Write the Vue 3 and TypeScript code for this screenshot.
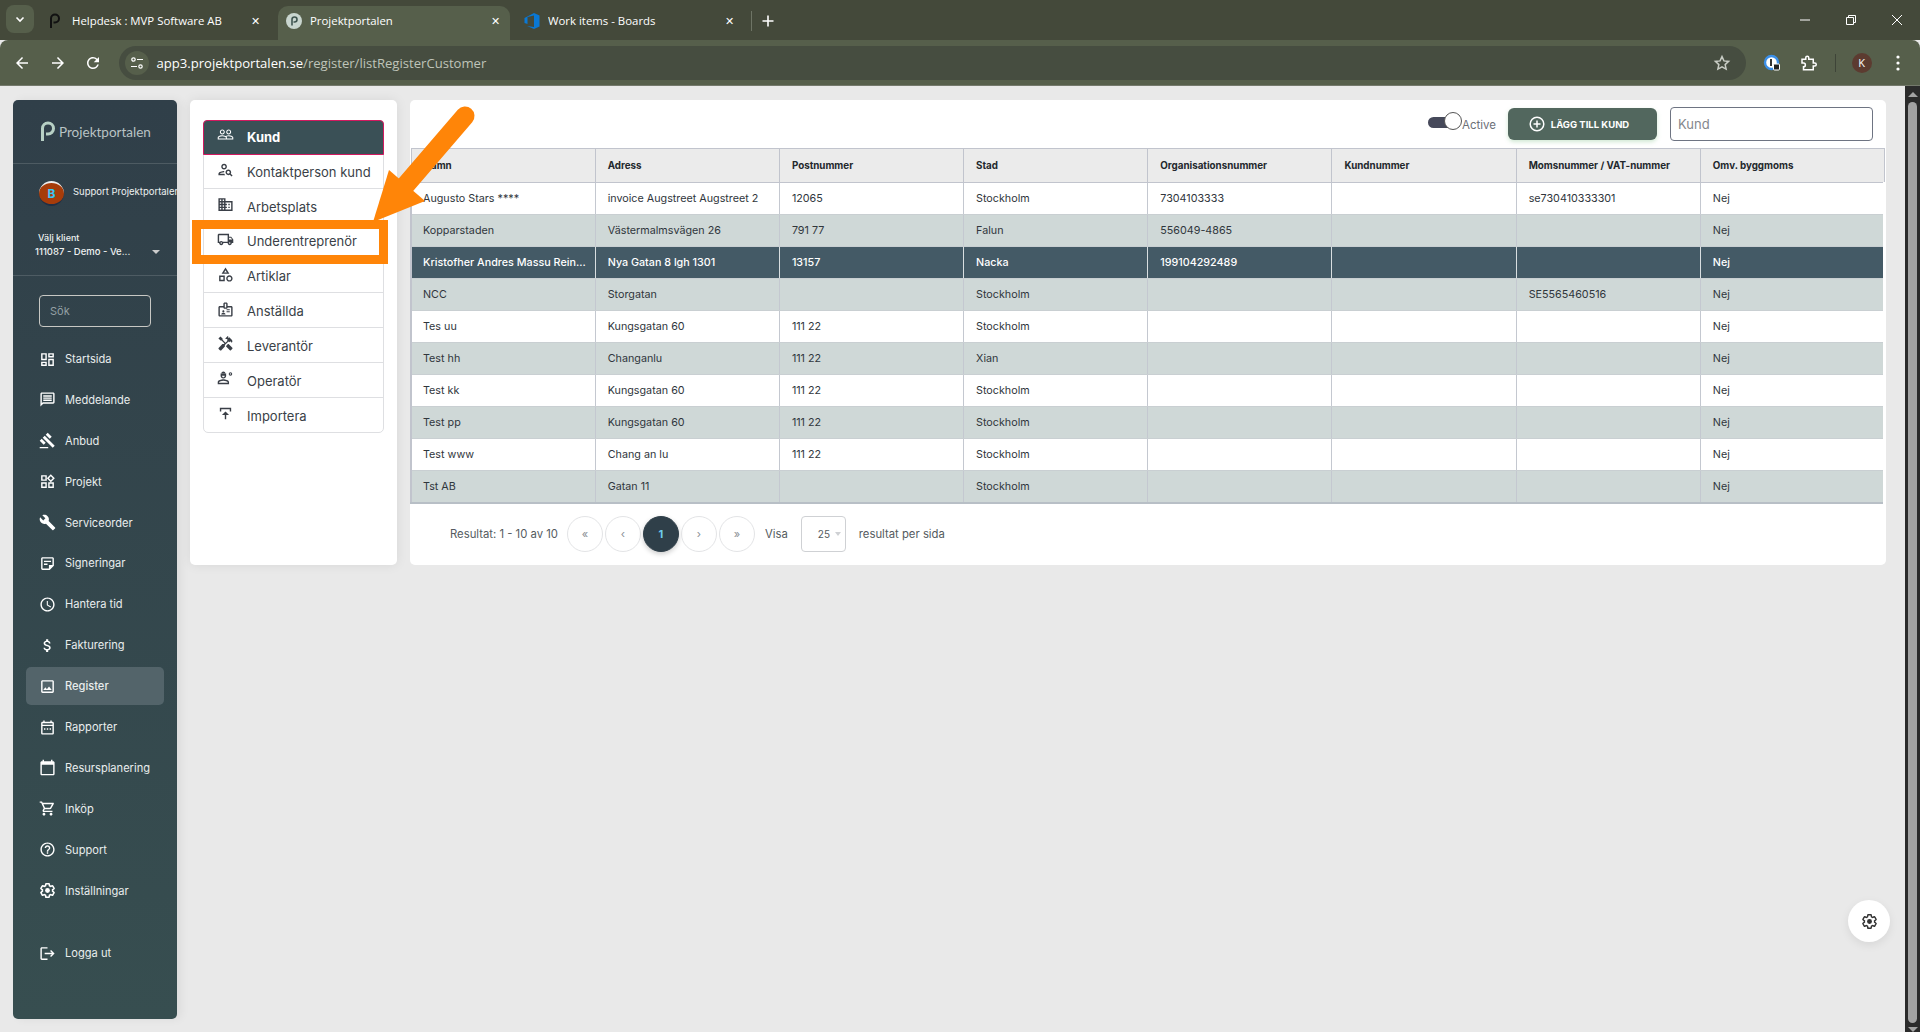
<script setup lang="ts">
const icons: Record<string, string> = {
  dashboard: 'M19 5v2h-4V5h4M9 5v6H5V5h4m10 8v6h-4v-6h4M9 17v2H5v-2h4M21 3h-8v6h8V3zM11 3H3v10h8V3zm10 8h-8v10h8V11zM11 15H3v6h8v-6z',
  message: 'M20 2H4c-1.1 0-1.99.9-1.99 2L2 22l4-4h14c1.1 0 2-.9 2-2V4c0-1.1-.9-2-2-2zm0 14H5.17L4 17.17V4h16v12zM6 12h12v2H6zm0-3h12v2H6zm0-3h12v2H6z',
  gavel: 'M1 21h12v2H1zM5.245 8.07l2.83-2.827 14.14 14.142-2.828 2.828zM12.317 1l5.657 5.656-2.83 2.83-5.654-5.66zM3.825 9.485l5.657 5.657-2.828 2.828-5.657-5.657z',
  widgets: 'M16.66 4.52l2.83 2.83-2.83 2.83-2.83-2.83 2.83-2.83M9 5v4H5V5h4m10 10v4h-4v-4h4M9 15v4H5v-4h4m7.66-13.31L11 7.34 16.66 13l5.66-5.66-5.66-5.65zM11 3H3v8h8V3zm10 10h-8v8h8v-8zm-10 0H3v8h8v-8z',
  build: 'M22.7 19l-9.1-9.1c.9-2.3.4-5-1.5-6.9-2-2-5-2.4-7.4-1.3L9 6 6 9 1.6 4.7C.4 7.1.9 10.1 2.9 12.1c1.9 1.9 4.6 2.4 6.9 1.5l9.1 9.1c.4.4 1 .4 1.4 0l2.3-2.3c.5-.4.5-1.1.1-1.4z',
  note: 'M19 5v9h-5v5H5V5h14m0-2H5c-1.1 0-2 .9-2 2v14c0 1.1.9 2 2 2h10l6-6V5c0-1.1-.9-2-2-2zm-7 11H7v-2h5v2zm5-4H7V8h10v2z',
  clock: 'M11.99 2C6.47 2 2 6.48 2 12s4.47 10 9.99 10C17.52 22 22 17.52 22 12S17.52 2 11.99 2zM12 20c-4.42 0-8-3.58-8-8s3.58-8 8-8 8 3.58 8 8-3.58 8-8 8zm.5-13H11v6l5.25 3.15.75-1.23-4.5-2.67z',
  money: 'M11.8 10.9c-2.27-.59-3-1.2-3-2.15 0-1.09 1.01-1.85 2.7-1.85 1.78 0 2.44.85 2.5 2.1h2.21c-.07-1.72-1.12-3.3-3.21-3.81V3h-3v2.16c-1.94.42-3.5 1.68-3.5 3.61 0 2.31 1.91 3.46 4.7 4.13 2.5.6 3 1.48 3 2.41 0 .69-.49 1.79-2.7 1.79-2.06 0-2.87-.92-2.98-2.1h-2.2c.12 2.19 1.76 3.42 3.68 3.83V21h3v-2.15c1.95-.37 3.5-1.5 3.5-3.55 0-2.84-2.43-3.81-4.7-4.4z',
  image: 'M19 5v14H5V5h14m0-2H5c-1.1 0-2 .9-2 2v14c0 1.1.9 2 2 2h14c1.1 0 2-.9 2-2V5c0-1.1-.9-2-2-2zm-4.86 8.86l-3 3.87L9 13.14 6 17h12l-3.86-5.14z',
  report: 'M19 4h-1V2h-2v2H8V2H6v2H5c-1.11 0-1.99.9-1.99 2L3 20c0 1.1.89 2 2 2h14c1.1 0 2-.9 2-2V6c0-1.1-.9-2-2-2zm0 16H5V10h14v10zm0-12H5V6h14v2zM7 13h2v2H7zm4 0h2v2h-2zm4 0h2v2h-2z',
  calendar: 'M20 3h-1V1h-2v2H7V1H5v2H4c-1.1 0-2 .9-2 2v16c0 1.1.9 2 2 2h16c1.1 0 2-.9 2-2V5c0-1.1-.9-2-2-2zm0 18H4V8h16v13z',
  cart: 'M15.55 13c.75 0 1.41-.41 1.75-1.03l3.58-6.49c.37-.66-.11-1.48-.87-1.48H5.21l-.94-2H1v2h2l3.6 7.59-1.35 2.44C4.52 15.37 5.48 17 7 17h12v-2H7l1.1-2h7.45zM6.16 6h12.15l-2.76 5H8.53L6.16 6zM7 18c-1.1 0-1.99.9-1.99 2S5.9 22 7 22s2-.9 2-2-.9-2-2-2zm10 0c-1.1 0-1.99.9-1.99 2s.89 2 1.99 2 2-.9 2-2-.9-2-2-2z',
  help: 'M11 18h2v-2h-2v2zm1-16C6.48 2 2 6.48 2 12s4.48 10 10 10 10-4.48 10-10S17.52 2 12 2zm0 18c-4.41 0-8-3.59-8-8s3.59-8 8-8 8 3.59 8 8-3.59 8-8 8zm0-14c-2.21 0-4 1.79-4 4h2c0-1.1.9-2 2-2s2 .9 2 2c0 2-3 1.75-3 5h2c0-2.25 3-2.5 3-5 0-2.21-1.79-4-4-4z',
  exit: 'M17 7l-1.41 1.41L18.17 11H8v2h10.17l-2.58 2.58L17 17l5-5zM4 5h8V3H4c-1.1 0-2 .9-2 2v14c0 1.1.9 2 2 2h8v-2H4V5z',
  people: 'M16.5 13c-1.2 0-3.07.34-4.5 1-1.43-.67-3.3-1-4.5-1C5.33 13 1 14.08 1 16.25V19h22v-2.75c0-2.17-4.33-3.25-6.5-3.25zm-4 4.5h-10v-1.25c0-.54 2.56-1.75 5-1.75s5 1.21 5 1.75v1.25zm9 0H14v-1.25c0-.46-.2-.86-.52-1.22.88-.3 1.96-.53 3.02-.53 2.44 0 5 1.21 5 1.75v1.25zM7.5 12c1.93 0 3.5-1.57 3.5-3.5S9.43 5 7.5 5 4 6.57 4 8.5 5.57 12 7.5 12zm0-5.5c1.1 0 2 .9 2 2s-.9 2-2 2-2-.9-2-2 .9-2 2-2zm9 5.5c1.93 0 3.5-1.57 3.5-3.5S18.43 5 16.5 5 13 6.57 13 8.5s1.57 3.5 3.5 3.5zm0-5.5c1.1 0 2 .9 2 2s-.9 2-2 2-2-.9-2-2 .9-2 2-2z',
  personSearch: 'M10 12c2.21 0 4-1.79 4-4s-1.79-4-4-4-4 1.79-4 4 1.79 4 4 4zm0-6c1.1 0 2 .9 2 2s-.9 2-2 2-2-.9-2-2 .9-2 2-2zM4 18c.22-.72 3.31-2 6-2 0-.7.13-1.37.35-1.99C7.62 13.91 2 15.27 2 18v2h9.54c-.52-.59-.93-1.27-1.21-2H4zM19.43 18.02c.36-.59.57-1.28.57-2.02 0-2.21-1.79-4-4-4s-4 1.79-4 4 1.79 4 4 4c.74 0 1.43-.22 2.02-.57L20.59 22 22 20.59l-2.57-2.57zM16 18c-1.1 0-2-.9-2-2s.9-2 2-2 2 .9 2 2-.9 2-2 2z',
  business: 'M12 7V3H2v18h20V7H12zM6 19H4v-2h2v2zm0-4H4v-2h2v2zm0-4H4V9h2v2zm0-4H4V5h2v2zm4 12H8v-2h2v2zm0-4H8v-2h2v2zm0-4H8V9h2v2zm0-4H8V5h2v2zm10 12h-8v-2h2v-2h-2v-2h2v-2h-2V9h8v10zm-2-8h-2v2h2v-2zm0 4h-2v2h2v-2z',
  truck: 'M20 8h-3V4H3c-1.1 0-2 .9-2 2v11h2c0 1.66 1.34 3 3 3s3-1.34 3-3h6c0 1.66 1.34 3 3 3s3-1.34 3-3h2v-5l-3-4zm-.5 1.5l1.96 2.5H17V9.5h2.5zM6 18c-.55 0-1-.45-1-1s.45-1 1-1 1 .45 1 1-.45 1-1 1zm2.22-3c-.55-.61-1.33-1-2.22-1s-1.67.39-2.22 1H3V6h12v9H8.22zM18 18c-.55 0-1-.45-1-1s.45-1 1-1 1 .45 1 1-.45 1-1 1z',
  category: 'M12 2l-5.5 9h11L12 2zm0 3.84L13.93 9h-3.87L12 5.84zM17.5 13c-2.49 0-4.5 2.01-4.5 4.5s2.01 4.5 4.5 4.5 4.5-2.01 4.5-4.5-2.01-4.5-4.5-4.5zm0 7c-1.38 0-2.5-1.12-2.5-2.5s1.12-2.5 2.5-2.5 2.5 1.12 2.5 2.5-1.12 2.5-2.5 2.5zM3 21.5h8v-8H3v8zm2-6h4v4H5v-4z',
  badge: 'M20 7h-5V4c0-1.1-.9-2-2-2h-2c-1.1 0-2 .9-2 2v3H4c-1.1 0-2 .9-2 2v11c0 1.1.9 2 2 2h16c1.1 0 2-.9 2-2V9c0-1.1-.9-2-2-2zM11 4h2v5h-2V4zm9 16H4V9h5c0 1.1.9 2 2 2h2c1.1 0 2-.9 2-2h5v11zm-11-4c.83 0 1.5-.67 1.5-1.5S9.83 13 9 13s-1.5.67-1.5 1.5S8.17 16 9 16zm2.08 1.18c-.64-.28-1.34-.43-2.08-.43s-1.44.15-2.08.43c-.56.24-.92.78-.92 1.39V19h6v-.43c0-.61-.36-1.15-.92-1.39zM13.5 16H18v-1.5h-4.5V16zm0-3H18v-1.5h-4.5V13z',
  handyman: 'M21.67 18.17l-5.3-5.3h-.99l-2.54 2.54v.99l5.3 5.3c.39.39 1.02.39 1.41 0l2.12-2.12c.39-.38.39-1.02 0-1.41zM17.34 10.19l1.41-1.41 2.12 2.12c1.17-1.17 1.17-3.07 0-4.24l-3.54-3.54-1.41 1.41V2.05l-.7-.71-3.54 3.54.71.71h2.83l-1.41 1.41 1.06 1.06-2.89 2.89-4.13-4.13V5.06L4.83 2.04 2 4.87 5.03 7.9h1.41l4.13 4.13-.85.85H7.6l-5.3 5.3c-.39.39-.39 1.02 0 1.41l2.12 2.12c.39.39 1.02.39 1.41 0l5.3-5.3v-2.12l5.15-5.15 1.06 1.05z',
  engineer: 'M9 13c-2.67 0-8 1.34-8 4v3h16v-3c0-2.66-5.33-4-8-4zm6 5H3v-.99C3.2 16.29 6.3 15 9 15s5.8 1.29 6 2V18zM9 12c2.21 0 4-1.79 4-4 0-.55-.11-1-.3-1.5H13V5H5v1.5h.3C5.11 7 5 7.45 5 8c0 2.21 1.79 4 4 4zm0-1.9c-1.1 0-2-.9-2-2.1h4c0 1.2-.9 2.1-2 2.1zM9 2a3 3 0 0 0-3 2.5h6A3 3 0 0 0 9 2zM19 3a2.5 2.5 0 1 0 0 5 2.5 2.5 0 0 0 0-5zm0 3.5a1 1 0 1 1 0-2 1 1 0 0 1 0 2z',
  upload: 'M4 4h16v2H4zM4 6h2v3H4zM18 6h2v3h-2zM12 9l-5 5h4v6h2v-6h4z',
}

const gearOutline = 'M19.14 12.94c.04-.3.06-.61.06-.94 0-.32-.02-.64-.07-.94l2.03-1.58c.18-.14.23-.41.12-.61l-1.92-3.32c-.12-.22-.37-.29-.59-.22l-2.39.96c-.5-.38-1.03-.7-1.62-.94l-.36-2.54c-.04-.24-.24-.41-.48-.41h-3.84c-.24 0-.43.17-.47.41l-.36 2.54c-.59.24-1.13.57-1.62.94l-2.39-.96c-.22-.08-.47 0-.59.22L2.74 8.87c-.12.21-.08.47.12.61l2.03 1.58c-.05.3-.09.63-.09.94s.02.64.07.94l-2.03 1.58c-.18.14-.23.41-.12.61l1.92 3.32c.12.22.37.29.59.22l2.39-.96c.5.38 1.03.7 1.62.94l.36 2.54c.05.24.24.41.48.41h3.84c.24 0 .44-.17.47-.41l.36-2.54c.59-.24 1.13-.56 1.62-.94l2.39.96c.22.08.47 0 .59-.22l1.92-3.32c.12-.22.07-.47-.12-.61l-2.01-1.58z'

const navItems = [
  { label: 'Startsida', icon: 'dashboard' },
  { label: 'Meddelande', icon: 'message' },
  { label: 'Anbud', icon: 'gavel' },
  { label: 'Projekt', icon: 'widgets' },
  { label: 'Serviceorder', icon: 'build' },
  { label: 'Signeringar', icon: 'note' },
  { label: 'Hantera tid', icon: 'clock' },
  { label: 'Fakturering', icon: 'money' },
  { label: 'Register', icon: 'image', active: true },
  { label: 'Rapporter', icon: 'report' },
  { label: 'Resursplanering', icon: 'calendar' },
  { label: 'Inköp', icon: 'cart' },
  { label: 'Support', icon: 'help' },
  { label: 'Inställningar', icon: 'gear' },
]

const subItems = [
  { label: 'Kund', icon: 'people', active: true },
  { label: 'Kontaktperson kund', icon: 'personSearch' },
  { label: 'Arbetsplats', icon: 'business' },
  { label: 'Underentreprenör', icon: 'truck' },
  { label: 'Artiklar', icon: 'category' },
  { label: 'Anställda', icon: 'badge' },
  { label: 'Leverantör', icon: 'handyman' },
  { label: 'Operatör', icon: 'engineer' },
  { label: 'Importera', icon: 'upload' },
]

const columns = ['Namn', 'Adress', 'Postnummer', 'Stad', 'Organisationsnummer', 'Kundnummer', 'Momsnummer / VAT-nummer', 'Omv. byggmoms']

const rows = [
  ['Augusto Stars ****', 'invoice Augstreet Augstreet 2', '12065', 'Stockholm', '7304103333', '', 'se730410333301', 'Nej'],
  ['Kopparstaden', 'Västermalmsvägen 26', '791 77', 'Falun', '556049-4865', '', '', 'Nej'],
  ['Kristofher Andres Massu Rein...', 'Nya Gatan 8 lgh 1301', '13157', 'Nacka', '199104292489', '', '', 'Nej'],
  ['NCC', 'Storgatan', '', 'Stockholm', '', '', 'SE5565460516', 'Nej'],
  ['Tes uu', 'Kungsgatan 60', '111 22', 'Stockholm', '', '', '', 'Nej'],
  ['Test hh', 'Changanlu', '111 22', 'Xian', '', '', '', 'Nej'],
  ['Test kk', 'Kungsgatan 60', '111 22', 'Stockholm', '', '', '', 'Nej'],
  ['Test pp', 'Kungsgatan 60', '111 22', 'Stockholm', '', '', '', 'Nej'],
  ['Test www', 'Chang an lu', '111 22', 'Stockholm', '', '', '', 'Nej'],
  ['Tst AB', 'Gatan 11', '', 'Stockholm', '', '', '', 'Nej'],
]

const selectedRow = 2
const pages = ['«', '‹', '1', '›', '»']
</script>

<template>
  <div class="browser">
    <div class="tabstrip">
      <div class="tab-search">
        <svg width="12" height="12" viewBox="0 0 12 12"><path d="M2.5 4.5 6 8l3.5-3.5" fill="none" stroke="#fff" stroke-width="1.6" /></svg>
      </div>
      <div class="tab tab-first">
        <svg class="favicon" viewBox="0 0 16 16"><path d="M5 15V5.500a4 4 0 1 1 4 4H7.500" fill="none" stroke="#111" stroke-width="2" /></svg>
        <span class="tab-title">Helpdesk : MVP Software AB</span>
        <span class="tab-x">✕</span>
      </div>
      <div class="tab tab-on">
        <svg class="favicon" viewBox="0 0 16 16"><circle cx="8" cy="8" r="8" fill="#c9d6cf" /><path d="M6 12.500V6.500a2.500 2.500 0 1 1 2.500 2.500H7.500" fill="none" stroke="#3f5550" stroke-width="1.600" /></svg>
        <span class="tab-title">Projektportalen</span>
        <span class="tab-x">✕</span>
      </div>
      <div class="tab tab-last">
        <svg class="favicon" viewBox="0 0 16 16"><path d="M10 0 15.500 2.500V13.500L10 16 3 13 10 14V2.500L3.500 4V11L.500 10V5z" fill="#0a78d4" /></svg>
        <span class="tab-title">Work items - Boards</span>
        <span class="tab-x">✕</span>
      </div>
      <div class="tab-sep"></div>
      <svg class="tab-plus" width="14" height="14" viewBox="0 0 14 14"><path d="M7 1.500v11M1.500 7h11" stroke="#fff" stroke-width="1.600" /></svg>
      <div class="window-btns">
        <svg width="12" height="12" viewBox="0 0 12 12"><path d="M1 6h10" stroke="#fff" /></svg>
        <svg width="12" height="12" viewBox="0 0 12 12"><path d="M1.500 3.500h7v7h-7zM3.500 3.500V1.500h7v7h-2" fill="none" stroke="#fff" /></svg>
        <svg width="12" height="12" viewBox="0 0 12 12"><path d="M1 1l10 10M11 1 1 11" stroke="#fff" /></svg>
      </div>
    </div>
    <div class="toolbar">
      <svg class="tool" viewBox="0 0 24 24"><path d="M20 11H7.830l5.590-5.590L12 4l-8 8 8 8 1.410-1.410L7.830 13H20z" /></svg>
      <svg class="tool" viewBox="0 0 24 24"><path d="M12 4l-1.410 1.410L16.170 11H4v2h12.170l-5.580 5.590L12 20l8-8z" /></svg>
      <svg class="tool" viewBox="0 0 24 24"><path d="M17.650 6.350A7.958 7.958 0 0 0 12 4c-4.420 0-7.990 3.580-7.990 8s3.570 8 7.990 8c3.730 0 6.840-2.550 7.730-6h-2.080A5.990 5.990 0 0 1 12 18c-3.310 0-6-2.690-6-6s2.690-6 6-6c1.660 0 3.140.690 4.220 1.780L13 11h7V4z" /></svg>
      <div class="omnibox">
        <span class="site-btn">
          <svg width="14" height="14" viewBox="0 0 14 14"><circle cx="3.500" cy="3.500" r="1.700" fill="none" stroke="#fff" stroke-width="1.200" /><path d="M7 3.500h6M1 10.500h6" stroke="#fff" stroke-width="1.200" /><circle cx="10.500" cy="10.500" r="1.700" fill="none" stroke="#fff" stroke-width="1.200" /></svg>
        </span>
        <span class="url"><b>app3.projektportalen.se</b>/register/listRegisterCustomer</span>
        <svg class="star" width="18" height="18" viewBox="0 0 24 24"><path d="M12 3.500l2.600 5.700 6.200.7-4.600 4.200 1.300 6.100L12 17.200l-5.500 3 1.300-6.100-4.600-4.200 6.200-.7z" fill="none" stroke="#c8ccc4" stroke-width="2" /></svg>
      </div>
      <div class="tool-right">
        <svg width="18" height="18" viewBox="0 0 18 18"><circle cx="8.500" cy="8.500" r="6.500" fill="#fff" stroke="#3b8fe8" stroke-width="2.400" /><rect x="7" y="5" width="2" height="7" fill="#333" /><rect x="10.500" y="10" width="6" height="6" rx="1" fill="#222" stroke="#fff" /></svg>
        <svg class="puzzle" width="18" height="18" viewBox="0 0 24 24"><path d="M4 7h5V5a2 2 0 0 1 4 0v2h6v5h2a2 2 0 0 1 0 4h-2v5H6v-4a2 2 0 0 0 0-5H4z" fill="none" stroke="#fff" stroke-width="2" /></svg>
        <span class="tool-sep"></span>
        <span class="profile">K</span>
        <svg class="dots" width="4" height="16" viewBox="0 0 4 16"><circle cx="2" cy="2" r="1.600" fill="#fff" /><circle cx="2" cy="8" r="1.600" fill="#fff" /><circle cx="2" cy="14" r="1.600" fill="#fff" /></svg>
      </div>
    </div>

    <div class="viewport">
      <div class="page">
        <aside class="sidebar">
          <div class="brand">
            <svg width="16" height="22" viewBox="0 0 16 22"><path d="M2.500 20V7.500a5.500 5.500 0 1 1 5.500 5.500H6" fill="none" stroke="#b7d0c4" stroke-width="3" /></svg>
            <span>Projektportalen</span>
          </div>
          <div class="user">
            <span class="avatar">B</span>
            <span class="user-name">Support Projektportalen</span>
          </div>
          <div class="client">
            <div class="client-label">Välj klient</div>
            <div class="client-value">111087 - Demo - Ve...<i class="caret"></i></div>
          </div>
          <div class="search-wrap">
            <div class="search">Sök</div>
          </div>
          <nav class="nav">
            <a v-for="item in navItems" :key="item.label" class="nav-item" :class="{ active: item.active }">
              <svg class="nav-icon" viewBox="0 0 24 24">
                <template v-if="item.icon === 'gear'">
                  <path :d="gearOutline" fill="none" stroke="currentColor" stroke-width="2.200" />
                  <circle cx="12" cy="12" r="3.400" />
                </template>
                <path v-else :d="icons[item.icon]" />
              </svg>
              {{ item.label }}
            </a>
            <a class="nav-item logout">
              <svg class="nav-icon" viewBox="0 0 24 24"><path :d="icons.exit" /></svg>
              Logga ut
            </a>
          </nav>
        </aside>

        <section class="panel">
          <ul class="sublist">
            <li v-for="item in subItems" :key="item.label" :class="{ active: item.active }">
              <svg class="sub-icon" viewBox="0 0 24 24"><path :d="icons[item.icon]" /></svg>
              {{ item.label }}
            </li>
          </ul>
        </section>

        <main class="content">
          <div class="actions">
            <div class="toggle"><i class="knob"></i></div>
            <span class="toggle-label">Active</span>
            <button class="add-btn">
              <svg width="16" height="16" viewBox="0 0 16 16"><circle cx="8" cy="8" r="6.800" fill="none" stroke="#fff" stroke-width="1.500" /><path d="M8 4.500v7M4.500 8h7" stroke="#fff" stroke-width="1.500" /></svg>
              LÄGG TILL KUND
            </button>
            <div class="filter">Kund</div>
          </div>
          <table class="grid">
            <thead>
              <tr>
                <th v-for="col in columns" :key="col">{{ col }}</th>
              </tr>
            </thead>
            <tbody>
              <tr v-for="(row, i) in rows" :key="i" :class="{ alt: i % 2 === 1, selected: i === selectedRow }">
                <td v-for="(cell, j) in row" :key="j">{{ cell }}</td>
              </tr>
            </tbody>
          </table>
          <div class="pager">
            <span class="result">Resultat: 1 - 10 av 10</span>
            <div class="pages">
              <span v-for="p in pages" :key="p" class="page-btn" :class="{ current: p === '1' }">{{ p }}</span>
            </div>
            <span class="show">Visa</span>
            <span class="per-page">25<i class="caret small"></i></span>
            <span class="show-after">resultat per sida</span>
          </div>
        </main>
      </div>
      <div class="scrollbar">
        <i class="arrow-up"></i>
        <div class="thumb"></div>
        <i class="arrow-down"></i>
      </div>

      <button class="fab">
        <svg width="17" height="17" viewBox="0 0 24 24">
          <path :d="gearOutline" fill="none" stroke="#333" stroke-width="2" />
          <circle cx="12" cy="12" r="3.500" fill="#333" />
        </svg>
      </button>

      <!-- annotation drawn on top of the screenshot -->
      <svg class="annotation" width="500" height="200" viewBox="0 0 500 200">
        <rect x="196.500" y="138.500" width="187" height="35" fill="none" stroke="#ff8508" stroke-width="9" />
        <path d="M465 30 404 101" stroke="#ff8508" stroke-width="19" stroke-linecap="round" fill="none" />
        <path d="M389 84 373 136 425 115z" fill="#ff8508" />
      </svg>
    </div>
  </div>
</template>

<style scoped>
.browser {
  width: 1920px;
  height: 1032px;
  display: flex;
  flex-direction: column;
  overflow: hidden;
  font-family: Inter, 'Liberation Sans', sans-serif;
  background: #e9e9e9;
}

/* browser frame */
.tabstrip {
  height: 40px;
  background: #44493a;
  display: flex;
  align-items: flex-end;
  padding-left: 6px;
  color: #fff;
  font-family: 'Open Sans', 'Liberation Sans', sans-serif;
  font-size: 11.400px;
}
.tab-search {
  width: 28px;
  height: 28px;
  margin-bottom: 7px;
  border-radius: 8px;
  background: #565f4b;
  display: flex;
  align-items: center;
  justify-content: center;
}
.tab {
  height: 34px;
  display: flex;
  align-items: center;
  box-sizing: border-box;
  padding-bottom: 5px;
}
.tab-first {
  width: 244px;
  padding-left: 12px;
  padding-right: 18px;
}
.tab-first .favicon {
  margin-right: 10px;
}
.tab-on {
  width: 232px;
  background: #565f4b;
  border-radius: 10px 10px 0 0;
  padding-left: 8px;
  padding-right: 10px;
}
.tab-last {
  width: 241px;
  padding-left: 14px;
  padding-right: 17px;
}
.favicon {
  width: 16px;
  height: 16px;
  margin-right: 8px;
  flex: none;
}
.tab-title {
  flex: 1;
  white-space: nowrap;
  overflow: hidden;
}
.tab-x {
  font-size: 11px;
}
.tab-sep {
  width: 1px;
  height: 20px;
  background: #6e7465;
  margin: 0 0 9px 0;
}
.tab-plus {
  margin: 0 0 12px 9px;
}
.window-btns {
  margin-left: auto;
  display: flex;
  gap: 34px;
  padding-right: 17px;
  align-self: flex-start;
  padding-top: 14px;
}
.toolbar {
  height: 46px;
  background: #565f4b;
  display: flex;
  align-items: center;
  padding-left: 13px;
  border-bottom: 1px solid #74796c;
  box-sizing: border-box;
  border-radius: 8px 8px 0 0;
}
.tool {
  width: 18px;
  height: 18px;
  fill: #fff;
  margin-right: 17.500px;
}
.omnibox {
  width: 1627px;
  height: 34px;
  background: #464d40;
  border-radius: 17px;
  display: flex;
  align-items: center;
  padding-left: 6px;
  box-sizing: border-box;
}
.tool + .omnibox {
  margin-left: -1px;
}
.site-btn {
  width: 24px;
  height: 24px;
  border-radius: 50%;
  background: #565f4b;
  display: flex;
  align-items: center;
  justify-content: center;
  margin-right: 8px;
}
.url {
  color: #bfc4b9;
  font-family: 'Open Sans', 'Liberation Sans', sans-serif;
  font-size: 13.100px;
}
.url b {
  color: #fff;
  font-weight: 400;
}
.star {
  margin-left: auto;
  margin-right: 15px;
}
.tool-right {
  display: flex;
  align-items: center;
  margin-left: 17px;
}
.puzzle {
  margin-left: 18px;
}
.tool-sep {
  width: 1px;
  height: 18px;
  background: #3e4438;
  margin: 0 16px 0 18px;
}
.profile {
  width: 20px;
  height: 20px;
  border-radius: 50%;
  background: #5c3b30;
  color: #fff;
  font-size: 11px;
  display: flex;
  align-items: center;
  justify-content: center;
  font-family: 'Open Sans', sans-serif;
}
.dots {
  margin-left: 24px;
}

/* page */
.viewport {
  flex: 1;
  display: flex;
  position: relative;
  min-height: 0;
}
.page {
  flex: 1;
  display: flex;
  align-items: flex-start;
  padding: 14px 19px 13px 13px;
  box-sizing: border-box;
  height: 100%;
}
.scrollbar {
  width: 15px;
  background: #2b2b2b;
  display: flex;
  flex-direction: column;
  align-items: center;
  padding-top: 6px;
  box-sizing: border-box;
}
.arrow-up {
  border: 5px solid transparent;
  border-top: 0;
  border-bottom: 5px solid #a3a3a3;
}
.thumb {
  width: 9px;
  height: 921px;
  background: #a3a3a3;
  border-radius: 5px;
  margin: 5px 0 4px;
}
.arrow-down {
  border: 5px solid transparent;
  border-bottom: 0;
  border-top: 5px solid #a3a3a3;
}

/* left menu */
.sidebar {
  width: 164px;
  height: 919px;
  flex: none;
  border-radius: 5px;
  background: linear-gradient(#303f49, #374e50);
  color: #eef1f1;
  box-shadow: 4px 0 10px rgba(0, 0, 0, 0.06);
  overflow: hidden;
}
.brand {
  height: 63px;
  display: flex;
  align-items: center;
  gap: 3px;
  padding: 0 0 0 27px;
  font-size: 13.500px;
  color: #b9c3c4;
  font-family: Lato, Inter, sans-serif;
  border-bottom: 1px solid rgba(255, 255, 255, 0.14);
}
.user {
  display: flex;
  align-items: center;
  height: 58px;
  padding-left: 26px;
  white-space: nowrap;
}
.avatar {
  width: 25px;
  height: 25px;
  flex: none;
  border-radius: 50%;
  background: #a63c0a;
  border-top: 2px solid #eee;
  border-bottom: 2px solid #1f2f45;
  box-sizing: border-box;
  color: #39c6f4;
  font-size: 12px;
  font-weight: 700;
  display: flex;
  align-items: center;
  justify-content: center;
}
.user-name {
  margin-left: 9px;
  font-size: 9.500px;
  margin-top: -3px;
}
.client {
  height: 54px;
  border-bottom: 1px solid rgba(255, 255, 255, 0.14);
  padding: 10px 0 0 22px;
  box-sizing: border-box;
  font-size: 9px;
  font-weight: 500;
}
.client-label {
  padding-left: 3px;
  margin-bottom: 3px;
}
.client-value {
  font-weight: 500;
  display: flex;
  align-items: center;
  font-size: 9.500px;
}
.caret {
  display: inline-block;
  border: 4px solid transparent;
  border-bottom: 0;
  border-top: 4px solid #ccc;
  margin-left: 22px;
}
.search-wrap {
  padding: 19px 26px 13px;
}
.search {
  height: 32px;
  width: 112px;
  box-sizing: border-box;
  border: 1px solid #c8c8c4;
  border-radius: 4px;
  padding-left: 10px;
  color: #93a0a4;
  font-size: 11px;
  line-height: 30px;
}
.nav {
  display: flex;
  flex-direction: column;
  gap: 2.900px;
  padding: 0 13px;
}
.nav-item {
  height: 38px;
  flex: none;
  display: flex;
  align-items: center;
  padding-left: 13px;
  font-size: 11.100px;
  border-radius: 5px;
  color: #e9eded;
}
.nav-item.active {
  background: #53646a;
  font-weight: 500;
}
.logout {
  margin-top: 22px;
}
.nav-icon {
  width: 17px;
  height: 17px;
  fill: #fff;
  color: #fff;
  margin-right: 9px;
  flex: none;
}

/* sub menu */
.panel {
  width: 207px;
  height: 465px;
  margin: 0 13px 0 13px;
  flex: none;
  background: #fff;
  border-radius: 5px;
  padding: 20px 13px 0;
  box-sizing: border-box;
  box-shadow: 0 0 12px rgba(0, 0, 0, 0.08);
}
.sublist {
  list-style: none;
  margin: 0;
  padding: 0;
  border: 1px solid #dedfe2;
  border-radius: 5px;
  width: 181px;
  box-sizing: border-box;
}
.sublist li {
  height: 34.800px;
  box-sizing: border-box;
  display: flex;
  align-items: center;
  padding: 2px 0 0 13px;
  font-size: 13px;
  color: #3a3f47;
  border-bottom: 1px solid #dedfe2;
}
.sublist li:last-child {
  border-bottom: 0;
}
.sublist li.active {
  background: #3a5056;
  color: #fff;
  font-weight: 700;
  height: 35px;
  padding: 0 0 2px 13px;
  border: 1px solid #d1195f;
  margin: -1px;
  border-radius: 4px 4px 0 0;
}
.sub-icon {
  width: 17px;
  height: 17px;
  margin-right: 13px;
  fill: currentColor;
  flex: none;
  transform: translateY(-2px);
}

/* table card */
.content {
  width: 1476px;
  height: 465px;
  flex: none;
  background: #fff;
  border-radius: 5px;
}
.actions {
  height: 48px;
  display: flex;
  align-items: center;
  justify-content: flex-end;
  padding-right: 13px;
}
.toggle {
  width: 25px;
  height: 11px;
  border-radius: 6px;
  background: #46495a;
  position: relative;
  margin-bottom: 3px;
}
.knob {
  position: absolute;
  right: -9px;
  top: -5px;
  width: 18px;
  height: 18px;
  border-radius: 50%;
  background: #fff;
  border: 1px solid #555;
  box-sizing: border-box;
}
.toggle-label {
  margin: 2px 12px 0 9px;
  font-size: 11.500px;
  color: #6c7078;
}
.add-btn {
  width: 149px;
  height: 32px;
  border: 0;
  border-radius: 6px;
  background: #52675e;
  color: #fff;
  font-family: inherit;
  font-size: 9.500px;
  font-weight: 700;
  display: flex;
  align-items: center;
  justify-content: center;
  gap: 6px;
  padding: 0 7px 0 0;
  box-shadow: 0 2px 4px rgba(120, 190, 130, 0.35);
}
.filter {
  width: 203px;
  height: 34px;
  box-sizing: border-box;
  margin-left: 13px;
  border: 1px solid #6e7482;
  border-radius: 4px;
  padding-left: 7px;
  line-height: 32px;
  font-size: 13px;
  color: #84878d;
}
.grid {
  width: 1476px;
  table-layout: fixed;
  border-collapse: collapse;
  font-size: 10.750px;
  color: #30363c;
}
th {
  height: 33px;
  padding: 0 12px;
  background: #ebebeb;
  border: 1px solid #c1c4cd;
  text-align: left;
  font-weight: 700;
  font-size: 9.800px;
  color: #23282d;
}
td {
  height: 32px;
  padding: 0 12px;
  border-right: 1px solid #c4c8d0;
  border-bottom: 1px solid #c9cfd2;
  box-sizing: border-box;
  white-space: nowrap;
  overflow: hidden;
}
td:first-child {
  border-left: 2px solid #c1c4cd;
  padding-left: 11px;
}
td:last-child {
  border-right: 3px solid #fff;
}
tr.alt td {
  background: #cfd8d7;
}
tr.selected td {
  background: #445a66;
  color: #fff;
  font-weight: 500;
  border-right-color: #d8dee0;
}
tr.selected td:last-child {
  border-right-color: #fff;
}
.grid tbody tr:last-child td {
  border-bottom: 2px solid #b8bfc6;
}
.pager {
  display: flex;
  align-items: center;
  height: 61px;
  padding: 0 0 0 40px;
  font-size: 11.300px;
  color: #555b60;
}
.pages {
  display: flex;
  gap: 2px;
  margin-left: 9px;
}
.page-btn {
  width: 36px;
  height: 36px;
  box-sizing: border-box;
  border: 1px solid #e3e4e6;
  border-radius: 50%;
  display: flex;
  align-items: center;
  justify-content: center;
  color: #8a8f94;
  font-size: 11px;
}
.page-btn.current {
  background: #2f3f49;
  border-color: #2f3f49;
  color: #6ecbea;
  font-weight: 700;
  box-shadow: 0 2px 5px rgba(0, 0, 0, 0.2);
}
.show {
  margin-left: 10px;
}
.per-page {
  width: 45px;
  height: 36px;
  box-sizing: border-box;
  margin-left: 13px;
  border: 1px solid #cfd1d4;
  border-radius: 4px;
  display: flex;
  align-items: center;
  padding-left: 16px;
  font-size: 10px;
}
.caret.small {
  border-width: 3px;
  border-bottom: 0;
  border-top: 4px solid #cfd1d4;
  margin-left: 5px;
}
.show-after {
  margin-left: 13px;
}

/* things lying over the page */
.fab {
  position: absolute;
  right: 30px;
  top: 814px;
  width: 42px;
  height: 42px;
  border: 0;
  padding: 0;
  border-radius: 50%;
  background: #fff;
  display: flex;
  align-items: center;
  justify-content: center;
  box-shadow: 0 3px 10px rgba(0, 0, 0, 0.08);
}
.annotation {
  position: absolute;
  left: 0;
  top: 0;
  pointer-events: none;
}
</style>

<style>
html,
body {
  margin: 0;
  overflow: hidden;
}
</style>
